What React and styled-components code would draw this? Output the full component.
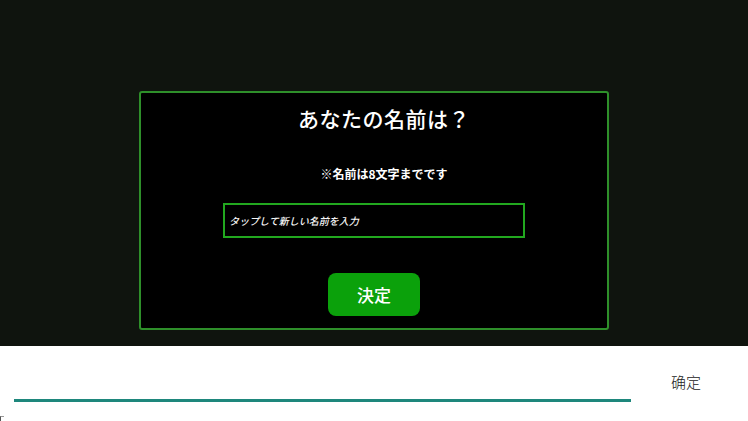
import styled, { createGlobalStyle } from "styled-components";

const GlobalStyle = createGlobalStyle`
  html, body {
    margin: 0;
    padding: 0;
    background: #ffffff;
  }
  body {
    font-family: "Noto Sans CJK JP", "Noto Sans", sans-serif;
  }
`;

const Screen = styled.div`
  width: 748px;
  height: 421px;
  display: flex;
  flex-direction: column;
  overflow: hidden;
`;

const Stage = styled.div`
  height: 346px;
  background: #0f140e;
  display: flex;
  justify-content: center;
  padding-top: 91px;
  box-sizing: border-box;
`;

const Dialog = styled.div`
  width: 470px;
  height: 239px;
  box-sizing: border-box;
  background: #000;
  border: 2px solid #2e8f2a;
  border-radius: 3px;
  display: flex;
  flex-direction: column;
  align-items: center;
  color: #fff;
`;

// both texts sit ~10px right of the dialog centre in the app
const Title = styled.h1`
  margin: 10px 0 0;
  padding-left: 20px;
  font-size: 21px;
  font-weight: 500;
  line-height: 30px;
  letter-spacing: 0.5px;
`;

const Note = styled.p`
  margin: 32px 0 0;
  padding-left: 20px;
  font-size: 12px;
  font-weight: 700;
  line-height: 18px;
`;

const NameInput = styled.input`
  margin-top: 20px;
  width: 302px;
  height: 35px;
  box-sizing: border-box;
  background: #000;
  border: 2px solid #22a81f;
  padding: 0 4px;
  color: #fff;
  font-family: "Noto Sans CJK JP", sans-serif;
  font-size: 10px;
  font-weight: 500;
  font-style: italic;
  outline: none;

  &::placeholder {
    color: #f6f6f6;
    opacity: 1;
  }
`;

const Submit = styled.button`
  margin-top: 35px;
  width: 92px;
  height: 43px;
  border: none;
  border-radius: 8px;
  background: #0ba10b;
  color: #fff;
  font-family: "Noto Sans CJK JP", sans-serif;
  font-size: 17px;
  font-weight: 500;
`;

const ImeBar = styled.div`
  flex: 1;
  background: #fff;
  display: flex;
  align-items: flex-start;
  padding: 0 0 0 14px;
  position: relative;
`;

const ImeField = styled.div`
  width: 617px;
  height: 53px;
  border-bottom: 3px solid #1e877c;
`;

const Confirm = styled.span`
  margin: 25px 0 0 40px;
  font-size: 15px;
  font-weight: 300;
  color: #222;
  font-family: "Noto Sans CJK SC", sans-serif;
`;

const Cursor = styled.span`
  position: absolute;
  left: 0;
  bottom: 0;
  width: 3px;
  height: 4px;
  border-left: 1px solid #555;
  border-top: 1px solid #999;
`;

export default function App() {
  return (
    <Screen>
      <GlobalStyle />
      <Stage>
        <Dialog>
          <Title>あなたの名前は？</Title>
          <Note>※名前は8文字までです</Note>
          <NameInput placeholder="タップして新しい名前を入力" />
          <Submit>決定</Submit>
        </Dialog>
      </Stage>
      <ImeBar>
        <ImeField />
        <Confirm>确定</Confirm>
        <Cursor />
      </ImeBar>
    </Screen>
  );
}
